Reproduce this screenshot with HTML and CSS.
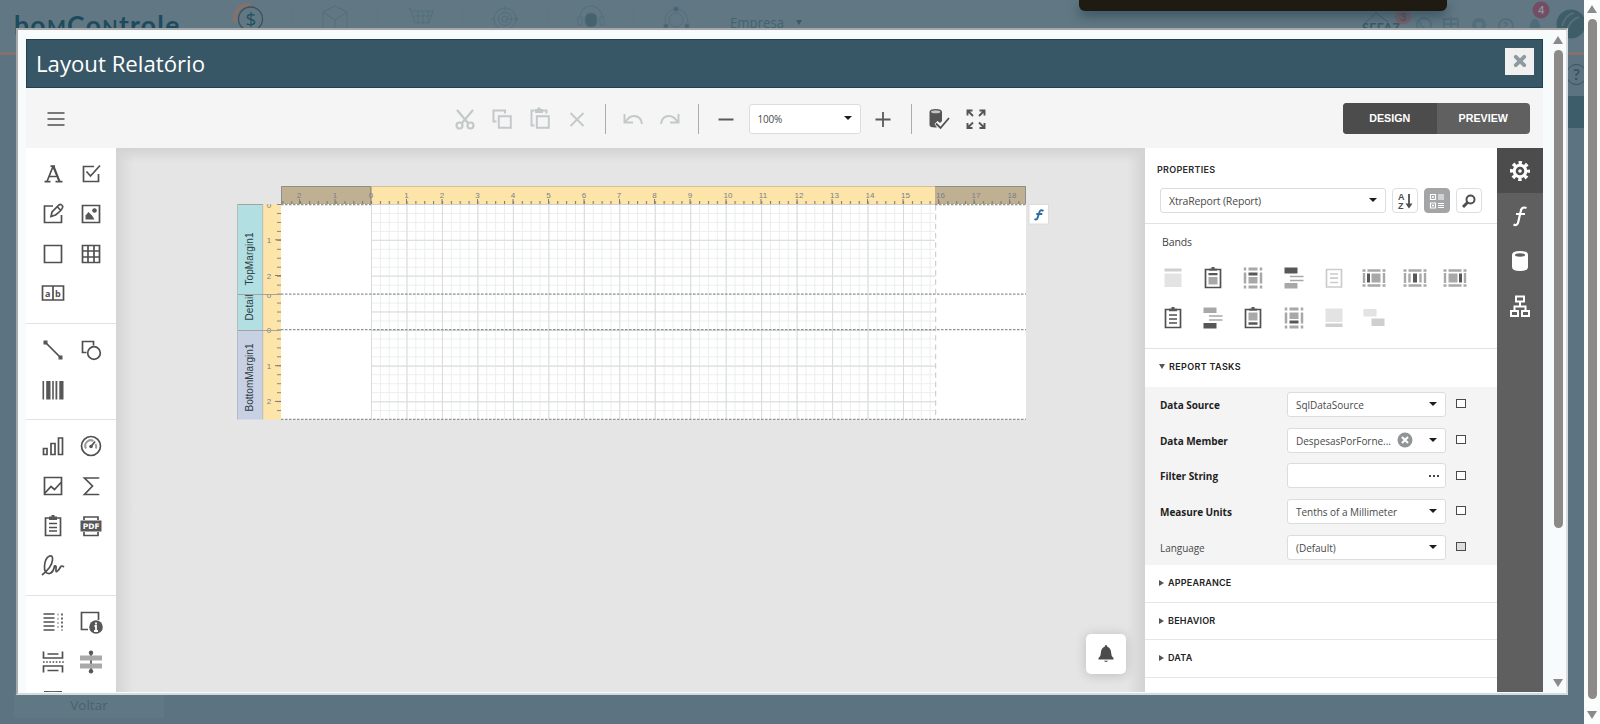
FILE: index.html
```html
<!DOCTYPE html>
<html lang="pt-BR">
<head>
<meta charset="utf-8">
<title>Layout Relatório</title>
<link rel="stylesheet" href="styles.css">
</head>
<body>
<div class="page">
  <header class="site-head">
    <div class="logo">bo<span>M</span>Co<span>N</span>trole</div>
    <svg class="site-icons" width="620" height="52" viewBox="190 0 620 52">
      <path d="M236 22a12 12 0 0 1 15-16" fill="none" stroke="#8a6f66" stroke-width="3.5"/>
      <circle cx="250.500" cy="19" r="12" fill="none" stroke="#38535f" stroke-width="1.300"/>
      <text x="245.500" y="26" class="coin">$</text>
      <g fill="none" stroke="#526e7b">
        <path d="M292 8v20M378 8v20M463 8v20M548 8v20M633 8v20" stroke="#5b7683"/>
        <path d="M323 12l12-6 12 6v16M323 12v16M323 12l12 8 12-8M335 20v8"/>
        <path d="M406 8h4l5 15h14l4-12h-22M414 16h18M418 11v12M423 11v12M428 11v12M416 27a2 2 0 1 0 3 0M426 27a2 2 0 1 0 3 0"/>
        <circle cx="505" cy="19" r="11"/><circle cx="505" cy="19" r="6.500"/><circle cx="505" cy="19" r="3"/><path d="M505 19h13l-3-3m3 3l-3 3M505 6v5M491 19h4"/>
        <path d="M580 17a11 11 0 0 1 22 0M578 17h4v8h-4zM600 17h4v8h-4z"/>
        <path d="M585 19q0-6 6-6t6 6v4q-1 4-6 4t-6-4z" fill="#46626f"/>
        <circle cx="676" cy="20" r="7"/><path d="M665 23q0-12 9-14M678 9q10 2 10 14"/>
        <path d="M674 7h4v4h-4zM664 24h4v4h-4zM685 24h4v4h-4z" fill="#46626f"/>
      </g>
      <text x="730" y="28" class="company" textLength="54" lengthAdjust="spacingAndGlyphs">Empresa</text>
      <path d="M796 20h6l-3 5z" fill="#3c5b69"/>
    </svg>
    <svg class="user-icons" width="264" height="52" viewBox="1320 0 264 52">
      <path d="M1364 24l12-11 12 9" fill="none" stroke="#46626f"/>
      <text x="1362" y="33" class="sefaz" textLength="38">SEFAZ</text>
      <g fill="none" stroke="#526e7b" stroke-width="2">
        <circle cx="1424" cy="25" r="7"/><path d="M1420 22q0 6 7 7"/><path d="M1444 19h14v12h-14zM1451 17v12M1444 24h14"/>
        <circle cx="1479" cy="25" r="5" stroke-width="4"/><circle cx="1506" cy="26" r="7"/>
      </g>
      <path d="M1529 29l2-7q4-7 8 0l2 7z" fill="#4f6b79"/>
      <text x="1503" y="30" class="small-q">?</text>
      <circle cx="1571" cy="24" r="14.500" fill="#3f5d69"/><path d="M1562 26q4-12 12-13M1567 30q3-10 12-13" stroke="#536f7d" fill="none" stroke-width="2"/>
      <circle cx="1403" cy="16.500" r="8" fill="#78616a"/><text x="1400" y="21" class="badge-txt">3</text>
      <circle cx="1541" cy="10" r="8.500" fill="#734d61"/><text x="1538" y="14" class="badge-txt light">4</text>
    </svg>
  </header>
  <div class="site-body">
    <div class="side-help"><span>?</span></div>
    <div class="side-box"></div>
    <div class="voltar">Voltar</div>
  </div>
  <div class="scroll outer">
    <i class="up"></i><b></b><i class="down"></i>
  </div>
  <div class="toast"></div>

  <section class="modal">
    <div class="modal-main">
      <div class="modal-title">
        <h1>Layout Relatório</h1>
        <button class="close"><svg width="16" height="16" viewBox="0 0 16 16"><path d="M3.800 3.800l8.400 8.400m0-8.400l-8.400 8.400" stroke="#8e9a9f" stroke-width="3.800" stroke-linecap="round"/></svg></button>
      </div>

      <div class="toolbar">
        <span class="tb menu"><svg width="24" height="24" viewBox="0 0 24 24"><path d="M3.500 6h17M3.500 12h17M3.500 18h17" stroke="#4f4f4f" stroke-width="1.700"/></svg></span>
        <span class="tb"><svg width="24" height="24" viewBox="0 0 24 24" fill="none" stroke="#c3c8c9" stroke-width="2.200"><path d="M4 3l11 13M20 3L9 16"/><circle cx="6.500" cy="18.500" r="3"/><circle cx="17.500" cy="18.500" r="3"/></svg></span>
        <span class="tb"><svg width="24" height="24" viewBox="0 0 24 24" fill="none" stroke="#c3c8c9" stroke-width="1.900"><path d="M6.500 14.500h-3v-11h11.500v3"/><path d="M8.800 9.300h12v11.500h-12z"/></svg></span>
        <span class="tb"><svg width="24" height="24" viewBox="0 0 24 24" fill="none" stroke="#c3c8c9" stroke-width="1.900"><path d="M6.500 18.500h-3v-15h3M15 3.500h3.500v3"/><path d="M8.800 9.300h12v11.500h-12z"/><path d="M7 2h2.500V0.500h3V2H15v4H7z" fill="#c3c8c9" stroke="none"/></svg></span>
        <span class="tb"><svg width="24" height="24" viewBox="0 0 24 24"><path d="M5.500 6l13 13m0-13l-13 13" stroke="#c3c8c9" stroke-width="1.900"/></svg></span>
        <span class="sep"></span>
        <span class="tb"><svg width="24" height="24" viewBox="0 0 24 24" fill="none" stroke="#c3c8c9" stroke-width="1.900"><path d="M3.500 7v8.500H12M4.500 15Q8 9 13 9q7 0 8 8"/></svg></span>
        <span class="tb"><svg width="24" height="24" viewBox="0 0 24 24" fill="none" stroke="#c3c8c9" stroke-width="1.900"><path d="M20.500 7v8.500H12M19.500 15Q16 9 11 9q-7 0-8 8"/></svg></span>
        <span class="sep"></span>
        <span class="tb"><svg width="24" height="24" viewBox="0 0 24 24"><path d="M4.500 12.500h15" stroke="#5a5a5a" stroke-width="2"/></svg></span>
        <span class="select zoom"><em>100%</em><i class="caret"></i></span>
        <span class="tb"><svg width="24" height="24" viewBox="0 0 24 24"><path d="M4.500 12.500h15M12 5v15" stroke="#5a5a5a" stroke-width="1.800"/></svg></span>
        <span class="sep"></span>
        <span class="tb"><svg width="24" height="24" viewBox="0 0 24 24"><path d="M2.500 5v13q0 2.500 5.500 2.500h2L7.500 17l3-3 2.500 2 2-2V5q0-3-6.250-3T2.500 5z" fill="#555"/><ellipse cx="8.700" cy="4.800" rx="4.600" ry="1.500" fill="#c5c5c5"/><path d="M9 16.500l4.500 4.500 8.500-10" fill="none" stroke="#4f4f4f" stroke-width="1.800"/></svg></span>
        <span class="tb"><svg width="24" height="24" viewBox="0 0 24 24" fill="none" stroke="#555" stroke-width="1.900"><path d="M3.500 8.500v-5h5M3.500 3.500l5.500 5.500M15.500 3.500h5v5M20.500 3.500l-5.500 5.500M3.500 16v5h5M3.500 21l5.500-5.500M15.500 21h5v-5M20.500 21l-5.500-5.500"/></svg></span>
        <div class="switch"><span class="on">DESIGN</span><span>PREVIEW</span></div>
      </div>

      <div class="work">
        <aside class="toolbox">
          <div class="tools">
            <svg viewBox="0 0 24 24"><path d="M12 4.500L6 19.500M12 4.500L18.500 19.500M8 14.500h8.500M9.500 4.200h4.500" class="s"/><path d="M12.500 4l6 15.500" class="s w"/><path d="M3.500 19.700h6M14.500 19.700h7" class="s"/></svg>
            <svg viewBox="0 0 24 24"><path d="M15 4.500H4.500v15h15V12M7.500 9.500l4 4.500L21 3.500" class="s"/></svg>
            <svg viewBox="0 0 24 24"><path d="M12 4H3.500v16.500H20.500V13" class="s"/><path d="M10 14.500l1-4.500 7-7q2-1.500 3.500 1t-7 9z M16.500 5l3 3" class="s"/></svg>
            <svg viewBox="0 0 24 24"><path d="M3.500 3.500h17v17h-17z" class="s"/><circle cx="15.500" cy="8.500" r="2.300" class="f"/><path d="M6.500 17.500v-4l3-3.500 3.500 3.500 2.500 4z" class="f"/></svg>
            <svg viewBox="0 0 24 24"><path d="M3.500 3.500h17v17h-17z" class="s"/></svg>
            <svg viewBox="0 0 24 24"><path d="M3.500 3.500h17v17h-17zM9 3.500v17M15 3.500v17M3.500 9h17M3.500 15h17" class="s"/></svg>
            <svg viewBox="0 0 24 24"><path d="M1.500 5h21v14h-21zM12 5v14" class="s"/><text x="4" y="15.500" class="ab">a</text><text x="14" y="15.500" class="ab">b</text></svg>
          </div>
          <div class="tools">
            <svg viewBox="0 0 24 24"><path d="M4.500 4.500l15 15" class="s"/><path d="M2.500 2.500h4v4h-4zM17.500 17.500h4v4h-4z" class="f"/></svg>
            <svg viewBox="0 0 24 24"><path d="M7.500 14.500h-4v-11h11v4" class="s"/><circle cx="15" cy="15" r="6.300" class="s"/></svg>
            <svg viewBox="0 0 24 24"><path d="M1.500 3h1.600v18.500H1.500zM5.200 3h4.300v18.500H5.200zM11.200 3h1.600v18.500h-1.600zM14.500 3h1.800v18.500h-1.800zM18.300 3h4.200v18.500h-4.200z" class="f"/></svg>
          </div>
          <div class="tools">
            <svg viewBox="0 0 24 24"><path d="M2.500 14.500h3.500v6H2.500zM10 9.500h4v11h-4zM17.500 4h4v16.500h-4z" class="s"/></svg>
            <svg viewBox="0 0 24 24"><circle cx="12" cy="12" r="9.500" class="s"/><path d="M7 14.500a5.500 5.500 0 0 1 7.500-7.500M16.500 10a5.500 5.500 0 0 1 .500 4.500" fill="none" stroke="#9a9a9a" stroke-width="2"/><circle cx="12" cy="12.500" r="1.800" class="f"/><path d="M12 12.500l4-5" class="s"/></svg>
            <svg viewBox="0 0 24 24"><path d="M3.500 3.500h17v17h-17zM4 19l6-6.500 3.500 3 6.500-7" class="s"/></svg>
            <svg viewBox="0 0 24 24"><path d="M19.500 4.500v-.500H5.500l8 8-8 8.500h14v-.500" class="s"/></svg>
            <svg viewBox="0 0 24 24"><path d="M8 4H4.500v17.500h15V4H16M8 9.500h8M8 13.500h8M8 17h8" class="s"/><path d="M8 6v-3.500h2.500V1h3v1.500H16V6z" class="f"/></svg>
            <svg viewBox="0 0 24 24"><path d="M5 6V3h14v3M5 18v3.500h14V18" class="s"/><path d="M1.500 6.500h21v11h-21z" class="f"/><text x="3.800" y="14.600" class="pdf">PDF</text></svg>
            <svg viewBox="0 0 24 24"><path d="M1 22q10-8 10.500-15Q12 2 8.500 3 4 5 3.500 13t5 7.500q4-1 5-7.500 2-1 1.500 3t1.500 2 3-4 3.500 0" class="s"/></svg>
          </div>
          <div class="tools last">
            <svg viewBox="0 0 24 24"><path d="M2.500 4h11M2.500 8h11M2.500 12h11M2.500 16h11M2.500 20h11" class="s"/><path d="M17 3.500v17" stroke="#aaa" stroke-width="1.500" stroke-dasharray="2 2.200" fill="none"/><path d="M21 3.500v17" class="s" stroke-dasharray="2 2"/></svg>
            <svg viewBox="0 0 24 24"><path d="M9 19.500H2.500v-17h17V10" class="s"/><circle cx="17" cy="17" r="6.800" class="f"/><path d="M17 12.500v2M15.500 16H17v5m-2 0h4" stroke="#fff" stroke-width="1.800" fill="none"/></svg>
            <svg viewBox="0 0 24 24"><path d="M2.500 1.500V8h19V1.500M6.500 4h11M2.500 22.500V16h19v6.500M6.500 20.500h11" class="s"/><path d="M2 12h21" class="s" stroke-dasharray="1.600 1.600"/></svg>
            <svg viewBox="0 0 24 24"><path d="M12 2v20" class="s"/><path d="M1 5.500h22v5H1zM1 13.500h22v5H1z" fill="#a9a9a9"/><circle cx="12" cy="2.700" r="2.200" class="f"/><circle cx="12" cy="21.300" r="2.200" class="f"/></svg>
            <svg viewBox="0 0 24 24"><path d="M4 3h16" class="s"/><path d="M3 2h5v3H3zM16 2h5v3h-5z" class="f"/></svg>
          </div>
        </aside>

        <main class="canvas">
          <svg class="surface" width="830" height="240" viewBox="230 180 830 240">
            <defs>
              <pattern id="ticks" x="371" y="200" width="8.867" height="4" patternUnits="userSpaceOnUse"><path d="M0.500 1v3" stroke="#837a70" stroke-width="1.200"/></pattern>
              <pattern id="g1" x="371" y="204" width="8.867" height="8.960" patternUnits="userSpaceOnUse"><path d="M0.500 0v9M0 0.500h9" stroke="#eceeee" fill="none"/></pattern>
              <pattern id="g2" x="371" y="204" width="35.467" height="35.800" patternUnits="userSpaceOnUse"><path d="M0.500 0v36M0 0.500h36" stroke="#d9dbdc" fill="none"/></pattern>
              <pattern id="g3" x="371" y="330" width="35.467" height="35.700" patternUnits="userSpaceOnUse"><path d="M0.500 0v36M0 0.500h36" stroke="#d9dbdc" fill="none"/></pattern>
              <pattern id="vt" x="277" y="204" width="4" height="8.960" patternUnits="userSpaceOnUse"><path d="M0 .500h4" stroke="#8d8577"/></pattern>
            </defs>
            <rect x="281" y="204" width="745" height="215.500" fill="#fff"/>
            <rect x="371" y="204" width="564" height="215" fill="url(#g1)"/>
            <rect x="371" y="204" width="564" height="90" fill="url(#g2)"/>
            <rect x="371" y="294" width="564" height="36" fill="url(#g2)"/>
            <rect x="371" y="330" width="564" height="89" fill="url(#g3)"/>
            <rect x="281" y="186" width="745" height="18" fill="#fde4a8"/>
            <path d="M281 186.500h745" stroke="#d6bf96"/>
            <rect x="281" y="186" width="90" height="18" fill="#bfb091"/>
            <rect x="935" y="186" width="91" height="18" fill="#bfb091"/>
            <path d="M281.500 204v-17.500H371M935 186.500h90.500V204" fill="none" stroke="#8e8e8a"/>
            <rect x="282" y="200" width="743" height="4" fill="url(#ticks)"/>
            <path d="M299.500 199v5M335 199v5M371 187v17M406.500 199v5M442 199v5M477.500 199v5M513 199v5M548.500 199v5M584 199v5M619.500 199v5M654.500 199v5M690 199v5M726 199v5M761 199v5M797 199v5M832 199v5M867.500 199v5M903 199v5M938.500 199v5M974 199v5M1009.500 199v5" stroke="#827d78"/>
            <path d="M371 204.500h564" stroke="#cdd0d3"/>
            <g class="num">
              <text x="299" y="197.500">2</text><text x="335" y="197.500">1</text><text x="371" y="197.500">0</text><text x="406.500" y="197.500">1</text><text x="442" y="197.500">2</text><text x="477.500" y="197.500">3</text><text x="513" y="197.500">4</text><text x="548.500" y="197.500">5</text><text x="584" y="197.500">6</text><text x="619" y="197.500">7</text><text x="654.500" y="197.500">8</text><text x="690" y="197.500">9</text><text x="728" y="197.500">10</text><text x="763" y="197.500">11</text><text x="799" y="197.500">12</text><text x="834.500" y="197.500">13</text><text x="870" y="197.500">14</text><text x="905.500" y="197.500">15</text><text x="940.500" y="197.500">16</text><text x="976" y="197.500">17</text><text x="1012" y="197.500">18</text>
            </g>
            <rect x="263" y="204" width="18" height="215.500" fill="#fde4a8"/>
            <rect x="277" y="204" width="4" height="215" fill="url(#vt)"/>
            <path d="M275 239.800h6M275 275.500h6M275 365.700h6M275 401.400h6" stroke="#827d78"/>
            <svg x="263" y="204" width="18" height="215" viewBox="263 204 18 215"><g class="num">
              <text x="269" y="207.500">0</text><text x="269" y="242.500">1</text><text x="269" y="278.500">2</text>
              <text x="269" y="368.500">1</text><text x="269" y="404">2</text>
            </g></svg>
            <svg x="263" y="294" width="18" height="40" viewBox="263 294 18 40"><g class="num"><text x="269" y="298">0</text><text x="269" y="333">0</text></g></svg>
            <rect x="237.500" y="204" width="25" height="126" fill="#b1dfe2"/>
            <rect x="237.500" y="330" width="25" height="89.500" fill="#c8d1e3"/>
            <path d="M237.500 204v215.500M262.700 204v215.500" stroke="#b5bcc1"/>
            <path d="M238 204.500h25M238 294.500h43M238 330.500h43" stroke="#a2a3a0"/>
            <svg x="238" y="204" width="25" height="90" viewBox="238 204 25 90"><text class="band" transform="translate(252.500 285.500) rotate(-90)" textLength="53">TopMargin1</text></svg>
            <svg x="238" y="295" width="25" height="35" viewBox="238 295 25 35"><text class="band" transform="translate(252.500 320.500) rotate(-90)" textLength="26">Detail</text></svg>
            <text class="band" transform="translate(252.500 411.500) rotate(-90)" textLength="68">BottomMargin1</text>
            <g stroke="#8f9394" stroke-dasharray="2.500 1.500" stroke-width="1.300" fill="none">
              <path d="M281 204.500h90M935 204.500h91M281 294.200h745M281 329.700h745M281 419.300h745"/>
            </g>
            <path d="M935.700 205v214" stroke="#c4c6c8" stroke-dasharray="5.500 3.800"/>
            <rect x="1029" y="204.500" width="19.500" height="19.500" fill="#fff" stroke="#dcdcdc"/>
            <path d="M1043.500 210.800q-3.500-2-4.300 2l-1.600 5q-.800 2.500-3.100 1.200M1036.300 214h6" stroke="#2c6fa5" stroke-width="2" fill="none"/>
          </svg>
          <div class="bell"><svg width="20" height="20" viewBox="0 0 20 20"><path d="M10 1q1.300 0 1.300 1.700 3.500 1.200 3.700 5.300 0 4 2.500 6v1.500h-15V14Q5 12 5 8q.200-4.100 3.700-5.300Q8.700 1 10 1z" fill="#4b4b4b"/><path d="M8 16.800h4q-2 2.500-4 0z" fill="#4b4b4b"/></svg></div>
        </main>

        <aside class="props">
          <h2>PROPERTIES</h2>
          <div class="pick">
            <span class="select"><em>XtraReport (Report)</em><i class="caret"></i></span>
            <span class="sq"><svg width="20" height="20" viewBox="0 0 20 20"><text x="3" y="9.200" class="az">A</text><text x="3" y="18.200" class="az">Z</text><path d="M14 3v13" stroke="#4f4f4f" stroke-width="1.800"/><path d="M10.500 12.500h7L14 17.500z" fill="#4f4f4f"/></svg></span>
            <span class="sq active"><svg width="20" height="20" viewBox="0 0 20 20" fill="none" stroke="#fff" stroke-width="1.200"><path d="M3.500 3.500h5v5h-5zM3.500 12h5v5h-5zM5 6h2M6 5v2M5 14.500h2M6 13.500v2M11 4h6M11 6h6M11 8h6M11 12.500h6M11 14.500h6M11 16.500h6"/></svg></span>
            <span class="sq"><svg width="20" height="20" viewBox="0 0 20 20"><circle cx="11.500" cy="8.500" r="4" fill="none" stroke="#4f4f4f" stroke-width="2"/><path d="M8.500 11.500L4 16" stroke="#4f4f4f" stroke-width="3"/></svg></span>
          </div>
          <div class="bands">
            <h3>Bands</h3>
            <div class="band-grid">
              <svg viewBox="0 0 24 24"><path d="M3.500 2.500h17v3h-17z" fill="#cfcfcf"/><path d="M3.500 7.500h17v13.500h-17z" fill="#e3e3e3"/></svg>
              <svg viewBox="0 0 24 24"><path d="M8 3.500H4.500V21.500h15V3.500H16" class="s"/><path d="M8 4.800V2.500h2.500V1h3v1.500H16v2.300zM7.500 7h9v2.300h-9z" class="f"/><path d="M7.500 11h9v7.500h-9z" class="g"/></svg>
              <svg viewBox="0 0 24 24"><path d="M4 1.500v21M20 1.500v21" stroke="#a8a8a8" stroke-width="2.500" stroke-dasharray="3 2 11 2"/><path d="M7.500 1.500h9v3h-9zM7.500 11h9v6.500h-9zM7.500 19.500h9v3h-9z" class="g"/><path d="M7.500 6.500h9v3h-9z" class="f"/></svg>
              <svg viewBox="0 0 24 24"><path d="M2.500 1.500h13v6h-13z" class="f"/><path d="M2.500 17h13v5.500h-13z" class="g"/><path d="M8 10.500h13.500M8 14.500h13.500" stroke="#a8a8a8" stroke-width="1.500"/></svg>
              <svg viewBox="0 0 24 24"><path d="M4.500 3.500h15v17.500h-15zM8 8h8M8 12.200h8M8 16.500h8" stroke="#ccc" stroke-width="1.700" fill="none"/></svg>
              <svg viewBox="0 0 24 24"><path d="M.500 4.500h3m2 0h13m2 0h3M.500 19.500h3m2 0h13m2 0h3M2 7v10M22 7v10" stroke="#a8a8a8" stroke-width="2.400"/><path d="M5 7.500h3v9H5z" class="f"/><path d="M9.500 7.500h9v9h-9z" class="g"/></svg>
              <svg viewBox="0 0 24 24"><path d="M.500 4.500h3m2 0h13m2 0h3M.500 19.500h3m2 0h13m2 0h3M2 7v10M22 7v10M6.500 7.500v9M17.500 7.500v9" stroke="#a8a8a8" stroke-width="2.400"/><path d="M10 7.500h4v9h-4z" class="f"/></svg>
              <svg viewBox="0 0 24 24"><path d="M.500 4.500h3m2 0h13m2 0h3M.500 19.500h3m2 0h13m2 0h3M2 7v10M22 7v10" stroke="#a8a8a8" stroke-width="2.400"/><path d="M16 7.500h3v9h-3z" class="f"/><path d="M5.500 7.500h9v9h-9z" class="g"/></svg>
              <svg viewBox="0 0 24 24"><path d="M8 3.500H4.500V21.500h15V3.500H16M8 9h8M8 13h8M8 17h8" class="s"/><path d="M8 5.200V2.500h2.500V1h3v1.500H16v2.700z" class="f"/></svg>
              <svg viewBox="0 0 24 24"><path d="M2.500 1.500h13V7h-13z" class="g"/><path d="M2.500 17h13v5.500h-13z" class="f"/><path d="M8 10h13.500M8 14h13.500" stroke="#a8a8a8" stroke-width="1.500"/></svg>
              <svg viewBox="0 0 24 24"><path d="M8 3.500H4.500V21.500h15V3.500H16" class="s"/><path d="M8 4.800V2.500h2.500V1h3v1.500H16v2.300zM7.500 16.200h9v2.500h-9z" class="f"/><path d="M7.500 6.500h9v8h-9z" class="g"/></svg>
              <svg viewBox="0 0 24 24"><path d="M4 1.500v21M20 1.500v21" stroke="#a8a8a8" stroke-width="2.500" stroke-dasharray="3 2 11 2"/><path d="M7.500 1.500h9v3h-9zM7.500 6.500h9v6.500h-9zM7.500 19.500h9v3h-9z" class="g"/><path d="M7.500 14.500h9v3h-9z" class="f"/></svg>
              <svg viewBox="0 0 24 24"><path d="M3.500 2.500h17V16h-17z" fill="#e3e3e3"/><path d="M3.500 17.500h17v3.500h-17z" fill="#cfcfcf"/></svg>
              <svg viewBox="0 0 24 24"><path d="M1.500 3h13v7.500h-13z" fill="#e3e3e3"/><path d="M9.500 12.500h13V20h-13z" fill="#cfcfcf"/></svg>
            </div>
          </div>
          <div class="group open"><i class="tri"></i>REPORT TASKS</div>
          <div class="fields">
            <div class="field"><label>Data Source</label><span class="select"><em>SqlDataSource</em><i class="caret"></i></span><u></u></div>
            <div class="field"><label>Data Member</label><span class="select"><em>DespesasPorForne...</em><svg class="clear" width="16" height="16" viewBox="0 0 16 16"><circle cx="8" cy="8" r="7.500" fill="#919596"/><path d="M5 5l6 6m0-6l-6 6" stroke="#fff" stroke-width="2"/></svg><i class="caret"></i></span><u></u></div>
            <div class="field"><label>Filter String</label><span class="select"><svg class="dots" width="12" height="4" viewBox="0 0 12 4"><path d="M1 1h2v2H1zM5 1h2v2H5zM9 1h2v2H9z" fill="#444"/></svg></span><u></u></div>
            <div class="field"><label>Measure Units</label><span class="select"><em>Tenths of a Millimeter</em><i class="caret"></i></span><u></u></div>
            <div class="field plain"><label>Language</label><span class="select"><em>(Default)</em><i class="caret"></i></span><u></u></div>
          </div>
          <div class="group"><i class="tri"></i>APPEARANCE</div>
          <div class="group"><i class="tri"></i>BEHAVIOR</div>
          <div class="group"><i class="tri"></i>DATA</div>
        </aside>

        <nav class="tabs">
          <span class="on"><svg width="24" height="24" viewBox="0 0 24 24"><circle cx="12" cy="12" r="5.800" fill="none" stroke="#fff" stroke-width="3"/><circle cx="12" cy="12" r="8.300" fill="none" stroke="#fff" stroke-width="3.400" stroke-dasharray="3.400 3.120" stroke-dashoffset="1.700"/><circle cx="12" cy="12" r="1.800" fill="#fff"/></svg></span>
          <span><svg width="24" height="24" viewBox="0 0 24 24"><path d="M18.500 4q-5-2-6 4l-2 9q-1 5.500-5 3.500M8 10h9" stroke="#fff" stroke-width="2.200" fill="none"/></svg></span>
          <span><svg width="24" height="24" viewBox="0 0 24 24"><path d="M4 6q0-4 8-4t8 4v12q0 4-8 4t-8-4z" fill="#fff"/><ellipse cx="12" cy="6" rx="5" ry="1.700" fill="#5f5f5f"/></svg></span>
          <span><svg width="24" height="24" viewBox="0 0 24 24" fill="none" stroke="#fff" stroke-width="2"><path d="M8 2.500h8v5H8zM3 17h7v5H3zM14 17h7v5h-7zM12 8v4.500M6.500 17v-4.500h11V17"/></svg></span>
        </nav>
      </div>
    </div>
    <div class="scroll inner">
      <i class="up"></i><b></b><i class="down"></i>
    </div>
  </section>
</div>
</body>
</html>
```
FILE: styles.css
```css
* { box-sizing: border-box; }
body { margin: 0; font-family: "Open Sans", "Noto Sans", sans-serif; overflow: hidden; }
h1, h2, h3 { margin: 0; font-weight: normal; }
em { font-style: normal; }
svg { display: block; }

.page { position: relative; width: 1600px; height: 724px; overflow: hidden; background: #5c7482; }
.site-head { display: flex; width: 1584px; height: 55px; background: #617884; border-bottom: 3px solid #84706c; }
.logo { width: 176px; margin-left: 14px; padding-top: 8px; font: bold 26.500px/34px Lato, sans-serif; letter-spacing: 1.3px; color: #1d4b5c; white-space: nowrap; }
.logo span { font-size: 20px; }
.user-icons { margin-left: auto; }
.coin { font: 19px "Open Sans", sans-serif; fill: #23505f; }
.company { font: 15px "Open Sans", sans-serif; fill: #43636f; }
.sefaz { font: bold 12.500px Lato, sans-serif; fill: #3b5865; }
.badge-txt { font: bold 11px Lato, sans-serif; fill: #4f5560; }
.badge-txt.light { fill: #8f93a5; }
.small-q { font: bold 11px Lato, sans-serif; fill: #4c6977; }

.site-body { display: flex; flex-direction: column; align-items: flex-start; height: 669px; width: 1584px; }
.side-help { width: 21px; height: 21px; margin: 9px 0 0 1566px; border: 1.500px solid #36535f; border-radius: 50%; color: #36535f; font: bold 16px/17px Lato, sans-serif; text-align: center; }
.side-box { width: 16px; height: 32px; margin: 11px 0 0 1568px; background: #3e5d6b; }
.voltar { width: 150px; height: 26px; margin: auto 0 6px 14px; background: #607883; color: #46636f; font-size: 13.500px; line-height: 26px; text-align: center; }

.scroll { display: flex; flex-direction: column; align-items: center; background: #fbfcfc; }
.scroll b { background: #8b8a89; border-radius: 5px; width: 9px; }
.scroll i { border: 5px solid transparent; border-top: 0; border-bottom: 8px solid #8b8a89; width: 0; height: 0; }
.scroll i.down { border-bottom: 0; border-top: 8px solid #8b8a89; }
.scroll.outer { position: absolute; top: 0; right: 0; width: 16px; height: 724px; padding: 5px 0; }
.scroll.outer b { height: 680px; margin: 6px 0 auto; }
.scroll.inner { width: 16px; margin: -7px 0 0 auto; padding: 5px 0 6px; background: transparent; }
.scroll.inner b { height: 478px; margin: 6px 0 auto; }

.toast { position: absolute; top: 0; left: 1079px; width: 368px; height: 11px; background: #1f1a12; border-radius: 0 0 6px 6px; box-shadow: 0 5px 12px rgba(40, 66, 78, .7); }

.modal { position: absolute; left: 16px; top: 28px; width: 1552px; height: 667px; display: flex; padding: 8px 0 0 8px; background: #f7fbfc; border: 2px solid #a5a7a9; border-right-color: #d8dcde; border-bottom-color: #d3dbe0; }
.modal-main { display: flex; flex-direction: column; width: 1517px; height: 653px; margin-top: 1px; }

.modal-title { display: flex; align-items: center; justify-content: space-between; height: 49px; padding: 0 8px 0 9px; background: #375666; border: 1px solid #1f4250; }
.modal-title h1 { font-size: 22.200px; color: #fff; line-height: 30px; }
.close { display: grid; place-items: center; width: 29px; height: 27px; margin-bottom: 5px; padding: 0; border: 0; background: #f0f0f0; }

.toolbar { display: flex; align-items: center; height: 60px; flex: none; padding-top: 1px; background: #f5f5f5; }
.tb { display: grid; place-items: center; width: 37.500px; }
.tb.menu { margin: 0 371.500px 0 11px; }
.sep { width: 1px; height: 30px; margin: 0 8.500px; background: #a9adae; }
.select { display: flex; align-items: center; justify-content: space-between; height: 25px; padding: 1px 8px 0; border: 1px solid #dcdcdc; border-radius: 3px; background: #fff; color: #4a4a4a; font-size: 10px; letter-spacing: -.03px; }
.select em { white-space: nowrap; }
.select.zoom { width: 112px; height: 30px; margin: 0 4px; letter-spacing: -.2px; }
.caret { flex: none; margin: -2px 0 0 auto; border: 4px solid transparent; border-top: 4px solid #1c1c1c; border-bottom: 0; }
.switch { display: flex; height: 31px; width: 187px; margin: 0 13px 0 auto; overflow: hidden; border-radius: 4px; background: #606060; color: #fff; font: bold 10.700px/31px "Liberation Sans", sans-serif; text-align: center; }
.switch span { flex: 1; }
.switch .on { background: #4c4c4c; }

.work { display: flex; flex: 1; min-height: 0; }
.toolbox { flex: none; width: 90px; overflow: hidden; background: #fff; }
.tools { display: grid; grid-template-columns: 38px 38px; grid-auto-rows: 39.700px; place-items: center; padding: 6.500px 0 9.400px 7.500px; border-bottom: 1px solid #e2e2e2; }
.tools svg, .band-grid svg { width: 24px; height: 24px; }
.s { fill: none; stroke: #505050; stroke-width: 1.700; }
.w { stroke-width: 2; }
.f { fill: #575757; }
.g { fill: #a8a8a8; }
.ab { font: bold 9px "Open Sans", sans-serif; fill: #505050; }
.pdf { font: bold 7.500px "DejaVu Sans", sans-serif; fill: #fff; }

.canvas { position: relative; flex: none; width: 1029px; padding: 32px 0 0 114px; background: linear-gradient(#d3d3d3, rgba(229, 229, 229, 0) 14px), linear-gradient(90deg, #d5d5d5, rgba(229, 229, 229, 0) 18px), linear-gradient(270deg, #d3d3d3, rgba(229, 229, 229, 0) 18px), #e5e5e5; }
.num { font: 8px "Liberation Sans", sans-serif; fill: #777f8b; text-anchor: middle; }
.band { font: 10px "Liberation Sans", sans-serif; fill: #2d3c44; }
.bell { position: absolute; right: 19px; bottom: 18px; display: grid; place-items: center; width: 40px; height: 40px; background: #fff; border-radius: 5px; box-shadow: 0 1px 12px rgba(0, 0, 0, .18); }

.props { flex: none; width: 352px; overflow: hidden; background: #fff; }
.props h2 { height: 40px; padding: 12px 0 0 12px; font: 600 9px/19px Inter, sans-serif; letter-spacing: .3px; color: #2a2a2a; }
.pick { display: flex; gap: 6px; height: 36px; padding-left: 15px; border-bottom: 1px solid #e2e2e2; }
.pick .select { width: 226px; font-size: 10.500px; letter-spacing: -.17px; }
.sq { display: grid; place-items: center; width: 26px; height: 25px; border: 1px solid #dedede; border-radius: 4px; }
.sq.active { background: #a3a5a6; border-color: #a3a5a6; }
.az { font: bold 9px "Liberation Sans", sans-serif; fill: #4f4f4f; }
.bands { height: 125px; border-bottom: 1px solid #e2e2e2; padding: 10px 0 0 8px; }
.bands h3 { padding-left: 9px; font-size: 10.500px; line-height: 17px; letter-spacing: -.1px; color: #3f3f3f; }
.band-grid { display: grid; grid-template-columns: repeat(8, 40.350px); grid-auto-rows: 40.300px; place-items: center; margin: 6.500px 0 0 -.5px; }
.group { display: flex; align-items: center; height: 37.500px; padding-left: 14px; border-bottom: 1px solid #e6e6e6; font: 600 9px/16px Inter, sans-serif; letter-spacing: .2px; color: #222; }
.group.open { height: 37.500px; padding-bottom: 1px; border: 0; letter-spacing: .35px; }
.tri { width: 0; height: 0; margin-right: 4px; border: 3px solid transparent; border-left: 5px solid #555; border-right: 0; }
.open .tri { border: 3px solid transparent; border-top: 5px solid #555; border-bottom: 0; margin: -2px 4px 0 0; }
.fields { background: #f4f4f4; height: 178.500px; }
.field { display: flex; align-items: center; height: 35.700px; padding-left: 15px; }
.field label { width: 127px; padding-top: 1px; font-weight: 700; font-size: 10px; letter-spacing: -.05px; color: #1f1f1f; }
.field.plain label { font-weight: 400; color: #4a4a4a; }
.field .select { width: 159px; }
.field u { width: 10px; height: 9px; margin: -1px 0 0 10px; border: 1px solid #4a4a4a; background: #fff; }
.field.plain u { background: #ddd; }
.clear { margin: -1px 16px 0 auto; }
.clear + .caret { margin-left: 0; }
.dots { margin: 0 -3px 0 auto; }

.tabs { flex: none; width: 46px; background: #5f5f5f; }
.tabs span { display: grid; place-items: center; height: 45px; }
.tabs .on { background: #4c4c4c; }
```
